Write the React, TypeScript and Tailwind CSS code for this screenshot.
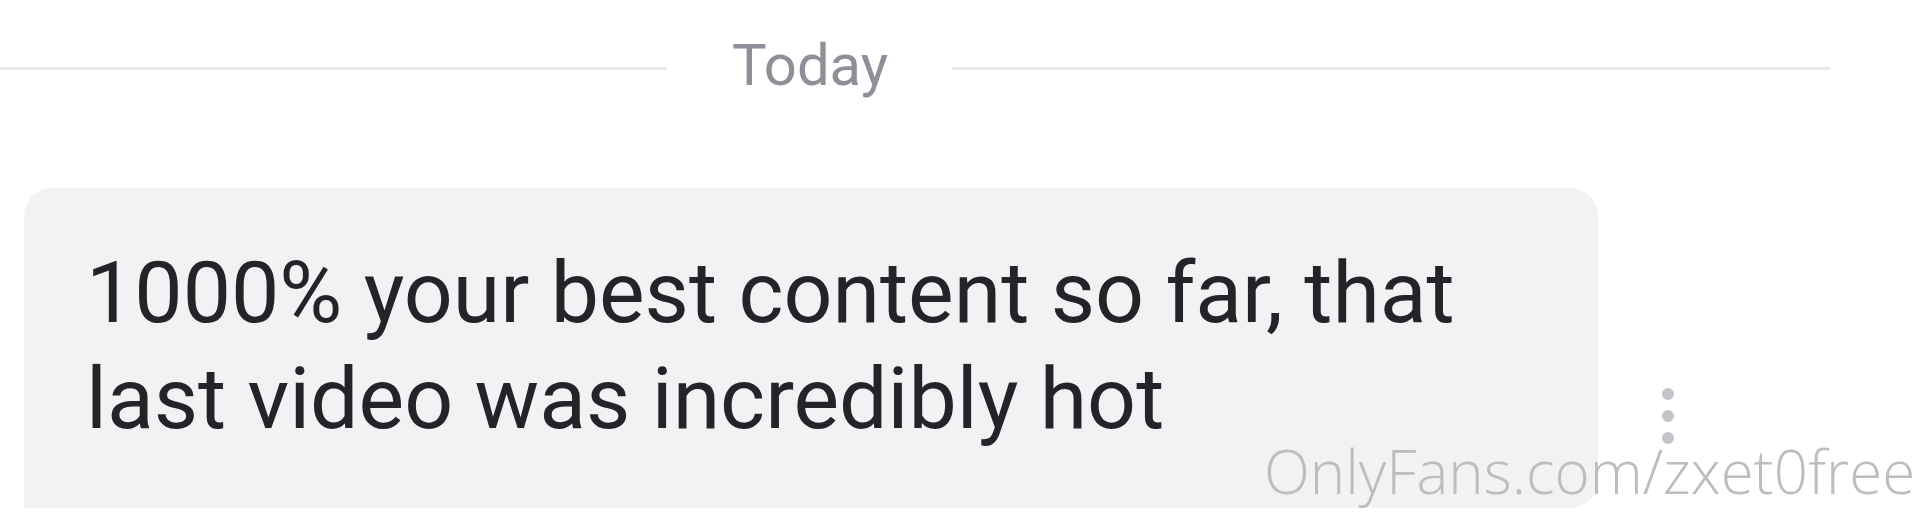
import React from "react";

export default function App() {
  return (
    <div
      className="relative h-[520px] w-[1920px] overflow-hidden bg-white"
      style={{ fontFamily: "Roboto, 'Liberation Sans', sans-serif" }}
    >
      {/* Date divider */}
      <div className="flex items-start pt-[36px]">
        <div className="mt-[31px] h-[3px] w-[667px] bg-[#e8e9eb]" />
        <div className="ml-[65px] mr-[64px] text-[58px] leading-[58px] text-[#8d9096]">
          Today
        </div>
        <div className="mt-[31px] h-[3px] w-[878px] bg-[#e8e9eb]" />
      </div>

      {/* Message row */}
      <div className="mt-[94px] flex items-end pl-[24px]">
        <div className="w-[1574px] rounded-tl-[28px] rounded-tr-[28px] rounded-br-[28px] rounded-bl-[4px] bg-[#f1f2f4] pb-[56px] pl-[62px] pr-[62px] pt-[52px]">
          <p className="text-[86px] leading-[106px] text-[#232428]">
            1000% your best content so far, that last video was incredibly hot
          </p>
        </div>
        <div className="mb-[64px] ml-[64px] flex flex-col gap-[10px]">
          <span className="block h-[12px] w-[12px] rounded-full bg-[#c3c4c9]" />
          <span className="block h-[12px] w-[12px] rounded-full bg-[#c3c4c9]" />
          <span className="block h-[12px] w-[12px] rounded-full bg-[#c3c4c9]" />
        </div>
      </div>

      {/* Watermark overlay */}
      <div
        className="pointer-events-none absolute left-[1264px] top-[441px] whitespace-nowrap text-[60px] font-light leading-[60px] text-[#bdbdbf]"
        style={{ fontFamily: "'Open Sans', 'Noto Sans', sans-serif" }}
      >
        OnlyFans.com/zxet0free
      </div>
    </div>
  );
}
